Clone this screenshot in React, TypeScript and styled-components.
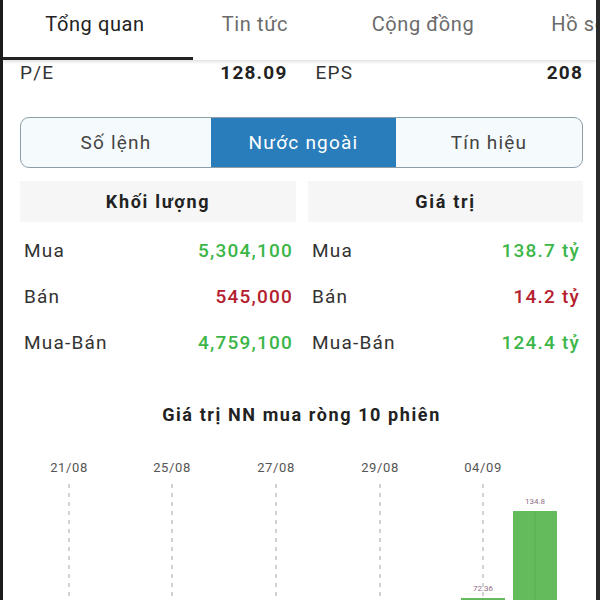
import React from "react";
import styled, { createGlobalStyle } from "styled-components";

const GlobalStyle = createGlobalStyle`
  html, body {
    margin: 0;
    padding: 0;
    background: #ffffff;
    overflow: hidden;
  }
  * {
    box-sizing: border-box;
  }
`;

const tabs = [
  { label: "Tổng quan", width: 190, active: true },
  { label: "Tin tức", width: 124 },
  { label: "Cộng đồng", width: 212 },
  { label: "Hồ sơ", width: 100 },
];

const segments = ["Số lệnh", "Nước ngoài", "Tín hiệu"];

const volumeRows = [
  { label: "Mua", value: "5,304,100", up: true },
  { label: "Bán", value: "545,000", up: false },
  { label: "Mua-Bán", value: "4,759,100", up: true },
];

const valueRows = [
  { label: "Mua", value: "138.7 tỷ", up: true },
  { label: "Bán", value: "14.2 tỷ", up: false },
  { label: "Mua-Bán", value: "124.4 tỷ", up: true },
];

const dates = [
  { label: "21/08", x: 66 },
  { label: "25/08", x: 169 },
  { label: "27/08", x: 273 },
  { label: "29/08", x: 377 },
  { label: "04/09", x: 480 },
];

const bars = [
  { x: 480, top: 148, label: "72.36" },
  { x: 532, top: 61, label: "134.8" },
];

const App = () => {
  return (
    <>
      <GlobalStyle />
      <Frame>
        <TabBar>
          {tabs.map((t) => (
            <Tab key={t.label} $width={t.width} $active={!!t.active}>
              {t.label}
            </Tab>
          ))}
        </TabBar>

        <Content>
          <StatRow>
            <StatCell>
              <StatLabel>P/E</StatLabel>
              <StatValue>128.09</StatValue>
            </StatCell>
            <StatCell>
              <StatLabel>EPS</StatLabel>
              <StatValue>208</StatValue>
            </StatCell>
          </StatRow>

          <Segmented>
            {segments.map((s, i) => (
              <Segment key={s} $active={i === 1}>
                {s}
              </Segment>
            ))}
          </Segmented>

          <Columns>
            <Column>
              <ColumnHead>Khối lượng</ColumnHead>
              {volumeRows.map((r) => (
                <DataRow key={r.label}>
                  <RowLabel>{r.label}</RowLabel>
                  <RowValue $up={r.up}>{r.value}</RowValue>
                </DataRow>
              ))}
            </Column>
            <Column>
              <ColumnHead>Giá trị</ColumnHead>
              {valueRows.map((r) => (
                <DataRow key={r.label}>
                  <RowLabel>{r.label}</RowLabel>
                  <RowValue $up={r.up}>{r.value}</RowValue>
                </DataRow>
              ))}
            </Column>
          </Columns>

          <ChartTitle>Giá trị NN mua ròng 10 phiên</ChartTitle>
        </Content>

        <Chart width="593" height="150" viewBox="0 0 593 150">
          {dates.map((d) => (
            <g key={d.label}>
              <text
                x={d.x}
                y={22}
                textAnchor="middle"
                fontSize="13"
                letterSpacing="0.6"
                fill="#555"
                fontFamily="Roboto, sans-serif"
              >
                {d.label}
              </text>
              <line
                x1={d.x}
                x2={d.x}
                y1={34}
                y2={150}
                stroke="#b5b5b5"
                strokeWidth="1.2"
                strokeDasharray="4 5"
              />
            </g>
          ))}
          {bars.map((b) => (
            <g key={b.label}>
              <rect x={b.x - 22} y={b.top} width={44} height={150 - b.top} fill="#63bb5c" />
              <line x1={b.x} x2={b.x} y1={b.top} y2={150} stroke="#5aaf53" strokeWidth="1" />
              <text
                x={b.x}
                y={b.top - 7}
                textAnchor="middle"
                fontSize="8"
                fill="#8f6f86"
                fontFamily="Roboto, sans-serif"
              >
                {b.label}
              </text>
            </g>
          ))}
        </Chart>
      </Frame>
    </>
  );
};

export default App;

const Frame = styled.div`
  width: 600px;
  height: 600px;
  overflow: hidden;
  border-left: 3px solid #1c1c1c;
  border-right: 4px solid #2b2b2b;
  background: #ffffff;
  font-family: Roboto, "Noto Sans", sans-serif;
  color: #333;
  display: flex;
  flex-direction: column;
`;

const TabBar = styled.div`
  height: 60px;
  flex-shrink: 0;
  display: flex;
  white-space: nowrap;
  overflow: hidden;
  box-shadow: 0 2px 3px rgba(0, 0, 0, 0.12);
  position: relative;
  z-index: 1;
`;

const Tab = styled.div<{ $width: number; $active: boolean }>`
  flex: 0 0 ${(p) => p.$width}px;
  display: flex;
  justify-content: center;
  padding-top: 12px;
  padding-right: ${(p) => (p.$active ? 6 : 0)}px;
  font-size: 20px;
  letter-spacing: 0.6px;
  color: ${(p) => (p.$active ? "#222" : "#6b6b6b")};
  border-bottom: 3px solid ${(p) => (p.$active ? "#222" : "transparent")};
`;

const Content = styled.div`
  padding: 0 13px 0 17px;
  display: flex;
  flex-direction: column;
`;

const StatRow = styled.div`
  height: 24px;
  display: grid;
  grid-template-columns: 1fr 1fr;
  gap: 28px;
  align-items: center;
  font-size: 19px;
  letter-spacing: 1.2px;
`;

const StatCell = styled.div`
  display: flex;
  justify-content: space-between;
  align-items: center;
`;

const StatLabel = styled.span`
  color: #333;
`;

const StatValue = styled.span`
  font-weight: 700;
  color: #222;
`;

const Segmented = styled.div`
  margin-top: 33px;
  height: 51px;
  display: grid;
  grid-template-columns: 190px 185px 1fr;
  border: 1.5px solid #8e9ea8;
  border-radius: 9px;
  overflow: hidden;
  background: #f5fafd;
`;

const Segment = styled.div<{ $active: boolean }>`
  display: flex;
  align-items: center;
  justify-content: center;
  font-size: 19px;
  letter-spacing: 1.2px;
  color: ${(p) => (p.$active ? "#ffffff" : "#444")};
  background: ${(p) => (p.$active ? "#2a7dbb" : "transparent")};
`;

const Columns = styled.div`
  margin-top: 13px;
  display: grid;
  grid-template-columns: 276px 1fr;
  gap: 12px;
`;

const Column = styled.div`
  display: flex;
  flex-direction: column;
`;

const ColumnHead = styled.div`
  height: 41px;
  margin-bottom: 5px;
  display: flex;
  align-items: center;
  justify-content: center;
  background: #f6f6f6;
  font-size: 18px;
  font-weight: 700;
  letter-spacing: 1.7px;
  color: #222;
`;

const DataRow = styled.div`
  height: 46px;
  display: flex;
  justify-content: space-between;
  align-items: center;
  padding: 0 4px 0 4px;
  font-size: 19px;
  letter-spacing: 1.2px;
`;

const RowLabel = styled.span`
  color: #333;
`;

const RowValue = styled.span<{ $up: boolean }>`
  font-weight: 500;
  margin-right: -1px;
  color: ${(p) => (p.$up ? "#3cb648" : "#b5202e")};
`;

const ChartTitle = styled.div`
  margin-top: 38px;
  line-height: 24px;
  text-align: center;
  font-size: 18px;
  font-weight: 700;
  letter-spacing: 1.6px;
  color: #222;
`;

const Chart = styled.svg`
  display: block;
  margin-top: 23px;
  flex-shrink: 0;
`;
